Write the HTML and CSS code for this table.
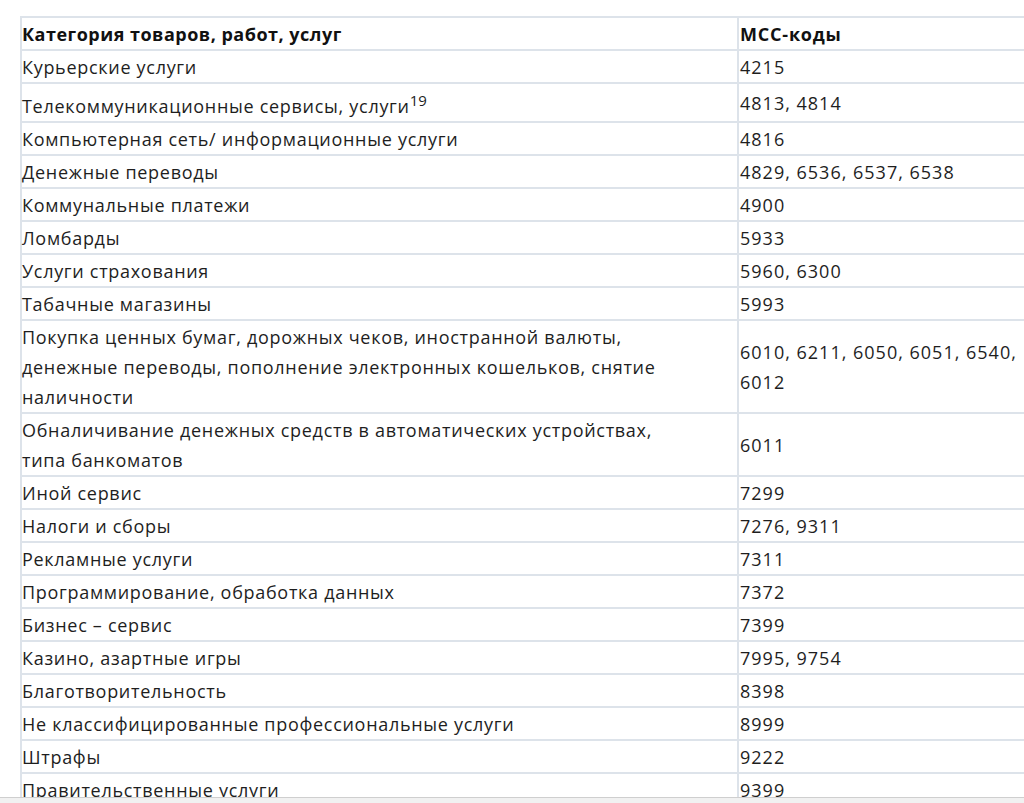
FILE: index.html
```html
<!DOCTYPE html>
<html lang="ru">
<head>
<meta charset="utf-8">
<link rel="stylesheet" href="styles.css">
</head>
<body>
<div class="page">
  <div class="scroller">
    <table class="mcc">
      <colgroup><col class="c1"><col class="c2"></colgroup>
      <thead>
        <tr><th>Категория товаров, работ, услуг</th><th class="code">МСС-коды</th></tr>
      </thead>
      <tbody>
        <tr><td>Курьерские услуги</td><td class="code">4215</td></tr>
        <tr><td>Телекоммуникационные сервисы, услуги<sup>19</sup></td><td class="code">4813, 4814</td></tr>
        <tr><td>Компьютерная сеть/ информационные услуги</td><td class="code">4816</td></tr>
        <tr><td>Денежные переводы</td><td class="code">4829, 6536, 6537, 6538</td></tr>
        <tr><td>Коммунальные платежи</td><td class="code">4900</td></tr>
        <tr><td>Ломбарды</td><td class="code">5933</td></tr>
        <tr><td>Услуги страхования</td><td class="code">5960, 6300</td></tr>
        <tr><td>Табачные магазины</td><td class="code">5993</td></tr>
        <tr><td>Покупка ценных бумаг, дорожных чеков, иностранной валюты, денежные переводы, пополнение электронных кошельков, снятие наличности</td><td class="code">6010, 6211, 6050, 6051, 6540, 6012</td></tr>
        <tr><td>Обналичивание денежных средств в автоматических устройствах, типа банкоматов</td><td class="code">6011</td></tr>
        <tr><td>Иной сервис</td><td class="code">7299</td></tr>
        <tr><td>Налоги и сборы</td><td class="code">7276, 9311</td></tr>
        <tr><td>Рекламные услуги</td><td class="code">7311</td></tr>
        <tr><td>Программирование, обработка данных</td><td class="code">7372</td></tr>
        <tr><td>Бизнес – сервис</td><td class="code">7399</td></tr>
        <tr><td>Казино, азартные игры</td><td class="code">7995, 9754</td></tr>
        <tr><td>Благотворительность</td><td class="code">8398</td></tr>
        <tr><td>Не классифицированные профессиональные услуги</td><td class="code">8999</td></tr>
        <tr><td>Штрафы</td><td class="code">9222</td></tr>
        <tr><td>Правительственные услуги</td><td class="code">9399</td></tr>
      </tbody>
    </table>
  </div>
  <div class="hbar"></div>
</div>
</body>
</html>
```
FILE: styles.css
```css
html, body {
  margin: 0;
  padding: 0;
  background: #fff;
}
.page {
  display: flex;
  flex-direction: column;
  height: 803px;
  overflow: hidden;
}
.scroller {
  flex: 1;
  overflow: hidden;
  padding: 16px 0 0 20px;
}
.mcc {
  border-collapse: collapse;
  table-layout: fixed;
  width: 1010px;
  font-family: "Open Sans", "Liberation Sans", sans-serif;
  font-size: 18px;
  line-height: 30px;
  letter-spacing: 0.7px;
  color: #1e1e1e;
}
.c1 { width: 717px; }
.c2 { width: 293px; }
.mcc th, .mcc td {
  border: 2px solid #dde3ea;
  padding: 1px 50px 0 0;
  text-align: left;
  vertical-align: middle;
}
.mcc .code {
  padding: 1px 0 0 1px;
  letter-spacing: 1px;
}
.mcc th {
  font-weight: 700;
  letter-spacing: 0.5px;
  color: #111;
}
.mcc th.code {
  letter-spacing: 0.8px;
}
.mcc sup {
  font-size: 15px;
  line-height: 30px;
  vertical-align: 7px;
  letter-spacing: 0;
}
.hbar {
  height: 5px;
  background: #f1f1f1;
  border-top: 1px solid #cfcfcf;
}
```
